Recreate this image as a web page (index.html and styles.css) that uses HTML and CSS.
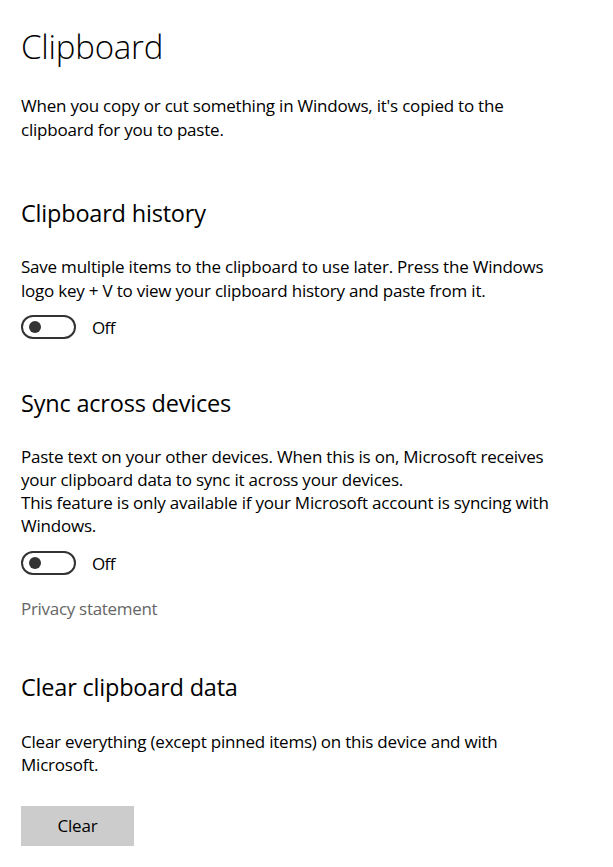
FILE: index.html
```html
<!DOCTYPE html>
<html lang="en">
<head>
<meta charset="utf-8">
<title>Clipboard</title>
<link rel="stylesheet" href="styles.css">
</head>
<body>
<main class="page">
  <h1 class="title">Clipboard</h1>
  <p class="text intro">When you copy or cut something in Windows, it's copied to the<br>clipboard for you to paste.</p>

  <section class="section history">
    <h2 class="heading">Clipboard history</h2>
    <p class="text desc">Save multiple items to the clipboard to use later. Press the Windows<br>logo key + V to view your clipboard history and paste from it.</p>
    <div class="toggle-row">
      <span class="toggle"><span class="knob"></span></span>
      <span class="toggle-label">Off</span>
    </div>
  </section>

  <section class="section sync">
    <h2 class="heading">Sync across devices</h2>
    <p class="text desc">Paste text on your other devices. When this is on, Microsoft receives<br>your clipboard data to sync it across your devices.<br>This feature is only available if your Microsoft account is syncing with<br>Windows.</p>
    <div class="toggle-row">
      <span class="toggle"><span class="knob"></span></span>
      <span class="toggle-label">Off</span>
    </div>
    <a class="link">Privacy statement</a>
  </section>

  <section class="section clear">
    <h2 class="heading">Clear clipboard data</h2>
    <p class="text desc">Clear everything (except pinned items) on this device and with<br>Microsoft.</p>
    <button class="button">Clear</button>
  </section>
</main>
</body>
</html>
```

FILE: styles.css
```css
* { box-sizing: border-box; }
html, body { margin: 0; padding: 0; background: #fff; }
body {
  font-family: "Open Sans", "Noto Sans", sans-serif;
  color: #000;
}
.page {
  padding: 27px 0 0 21px;
  display: flex;
  flex-direction: column;
  align-items: flex-start;
}
.title {
  margin: 0;
  font-size: 33px;
  font-weight: 300;
  line-height: 40px;
  height: 40px;
  letter-spacing: -0.2px;
}
.text {
  margin: 0;
  font-size: 17px;
  line-height: 23.5px;
  letter-spacing: -0.22px;
  white-space: nowrap;
}
.intro { margin-top: 27px; }
.section {
  display: flex;
  flex-direction: column;
  align-items: flex-start;
}
.heading {
  margin: 0;
  font-size: 23.5px;
  font-weight: 400;
  line-height: 28px;
  letter-spacing: -0.2px;
}
.history { margin-top: 58px; }
.sync { margin-top: 50px; }
.clear { margin-top: 52.5px; }
.desc { margin-top: 28px; }
.clear .desc { margin-top: 29px; }
.sync .desc { line-height: 23px; }
.toggle-row {
  margin-top: 13px;
  display: flex;
  align-items: center;
  gap: 16px;
  height: 24px;
}
.sync .toggle-row { margin-top: 14px; }
.toggle {
  width: 55px;
  height: 24px;
  border: 2px solid #333;
  border-radius: 12px;
  display: flex;
  align-items: center;
  padding-left: 6px;
}
.knob {
  width: 12px;
  height: 12px;
  border-radius: 50%;
  background: #333;
}
.toggle-label {
  font-size: 17px;
  letter-spacing: -0.6px;
}
.link {
  margin-top: 22px;
  font-size: 17px;
  line-height: 23px;
  letter-spacing: -0.3px;
  color: #666;
}
.button {
  margin-top: 29px;
  width: 113px;
  height: 40px;
  border: 0;
  background: #ccc;
  font-family: inherit;
  font-size: 17px;
  letter-spacing: -0.2px;
  color: #000;
  padding: 0;
}
```
